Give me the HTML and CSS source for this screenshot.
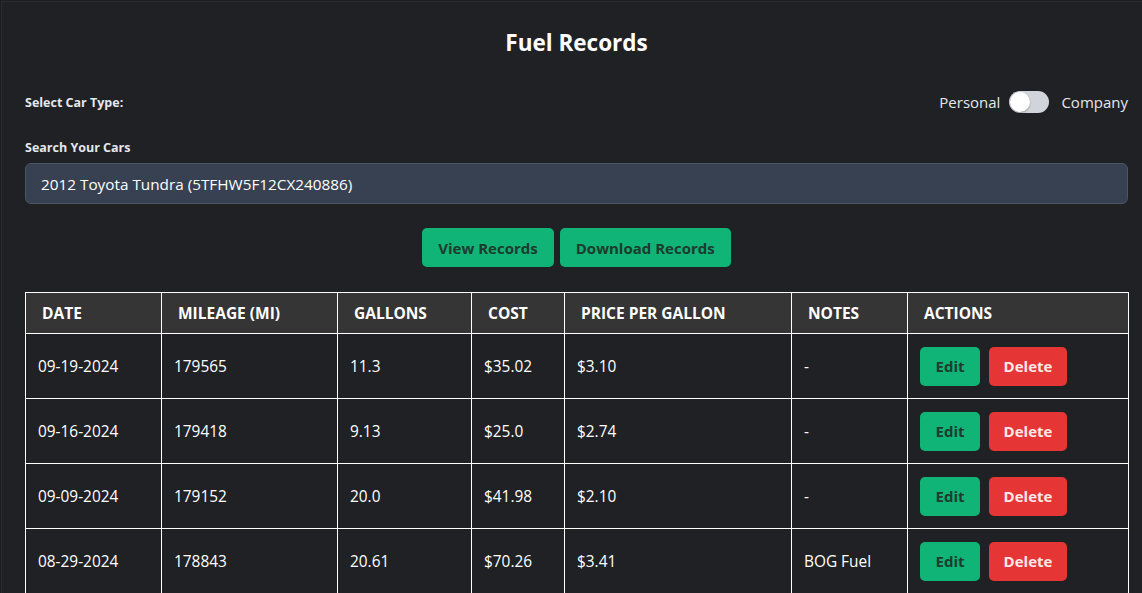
FILE: index.html
```html
<!DOCTYPE html>
<html>
<head>
<meta charset="utf-8">
<link rel="stylesheet" href="styles.css">
</head>
<body>
<div class="card">
  <h1 class="title">Fuel Records</h1>
  <div class="type-row">
    <span class="label">Select Car Type:</span>
    <div class="toggle-group">
      <span>Personal</span>
      <span class="switch"><span class="knob"></span></span>
      <span>Company</span>
    </div>
  </div>
  <div class="search">
    <div class="label">Search Your Cars</div>
    <div class="input">2012 Toyota Tundra (5TFHW5F12CX240886)</div>
  </div>
  <div class="actions-bar">
    <button class="btn btn-green">View Records</button>
    <button class="btn btn-green">Download Records</button>
  </div>
  <table class="records">
    <colgroup>
      <col style="width:136px"><col style="width:176px"><col style="width:134px"><col style="width:93px"><col style="width:227px"><col style="width:116px"><col>
    </colgroup>
    <thead>
      <tr><th>Date</th><th>Mileage (mi)</th><th>Gallons</th><th>Cost</th><th>Price per Gallon</th><th>Notes</th><th>Actions</th></tr>
    </thead>
    <tbody>
      <tr><td>09-19-2024</td><td>179565</td><td>11.3</td><td>$35.02</td><td>$3.10</td><td>-</td><td><div class="row-btns"><button class="btn btn-green btn-edit">Edit</button><button class="btn btn-red btn-delete">Delete</button></div></td></tr>
      <tr><td>09-16-2024</td><td>179418</td><td>9.13</td><td>$25.0</td><td>$2.74</td><td>-</td><td><div class="row-btns"><button class="btn btn-green btn-edit">Edit</button><button class="btn btn-red btn-delete">Delete</button></div></td></tr>
      <tr><td>09-09-2024</td><td>179152</td><td>20.0</td><td>$41.98</td><td>$2.10</td><td>-</td><td><div class="row-btns"><button class="btn btn-green btn-edit">Edit</button><button class="btn btn-red btn-delete">Delete</button></div></td></tr>
      <tr><td>08-29-2024</td><td>178843</td><td>20.61</td><td>$70.26</td><td>$3.41</td><td>BOG Fuel</td><td><div class="row-btns"><button class="btn btn-green btn-edit">Edit</button><button class="btn btn-red btn-delete">Delete</button></div></td></tr>
    </tbody>
  </table>
</div>
</body>
</html>
```
FILE: styles.css
```css
* { box-sizing: border-box; }
html, body { margin: 0; padding: 0; background: #1c1d20; overflow: hidden; }
body {
  font-family: "Open Sans", "Noto Sans", sans-serif;
  color: #ffffff;
  font-size: 15.3px;
}
.card {
  margin: 1px 0 0 1px;
  border-top: 1px solid #2b2c2f;
  border-left: 1px solid #2b2c2f;
  background: #202124;
  padding: 26px 14px 0 23px;
  min-height: 600px;
}
.title {
  margin: 0;
  text-align: center;
  font-size: 22.5px;
  font-weight: 700;
  line-height: 30px;
}
.type-row {
  display: flex;
  justify-content: space-between;
  align-items: center;
  margin-top: 31px;
  height: 26px;
}
.label {
  font-size: 12.5px;
  font-weight: 700;
  color: #e5e7eb;
}
.toggle-group {
  display: flex;
  align-items: center;
  gap: 9px;
  font-size: 15px;
  color: #e5e7eb;
}
.toggle-group .switch { margin-right: 3px; }
.switch {
  width: 40px;
  height: 22px;
  border-radius: 11px;
  background: #d1d5db;
  position: relative;
  display: inline-block;
}
.knob {
  position: absolute;
  left: 1px;
  top: 1px;
  width: 20px;
  height: 20px;
  border-radius: 50%;
  background: #ffffff;
  box-shadow: 0 1px 2px rgba(0,0,0,0.3);
}
.search { margin-top: 24px; }
.search .label { line-height: 18px; margin-bottom: 6px; }
.input {
  height: 41px;
  background: #374151;
  border: 1px solid #4b5563;
  border-radius: 6px;
  padding: 0 15px;
  display: flex;
  align-items: center;
  font-size: 15.3px;
  color: #ffffff;
}
.actions-bar {
  display: flex;
  justify-content: center;
  gap: 6px;
  margin-top: 24px;
}
.btn {
  font-family: inherit;
  font-weight: 700;
  font-size: 15px;
  border: none;
  border-radius: 5px;
  height: 39px;
  padding: 0 16px;
  cursor: pointer;
}
.btn-green { background: #10b476; color: #1d3b2f; }
.btn-red { background: #e53535; color: #fde8e8; }
.records {
  margin-top: 25px;
  width: 1104px;
  border-collapse: collapse;
  table-layout: fixed;
}
.records th, .records td {
  border: 1px solid #ffffff;
  text-align: left;
}
.records th {
  background: #353535;
  text-transform: uppercase;
  font-weight: 700;
  font-size: 15.5px;
  height: 41px;
  padding: 0 16px;
}
.records td {
  height: 65px;
  padding: 0 12px;
  font-size: 15.4px;
}
.row-btns { display: flex; gap: 9px; }
.row-btns .btn { padding: 0; }
.btn-edit { width: 60px; }
.btn-delete { width: 78px; }
```
